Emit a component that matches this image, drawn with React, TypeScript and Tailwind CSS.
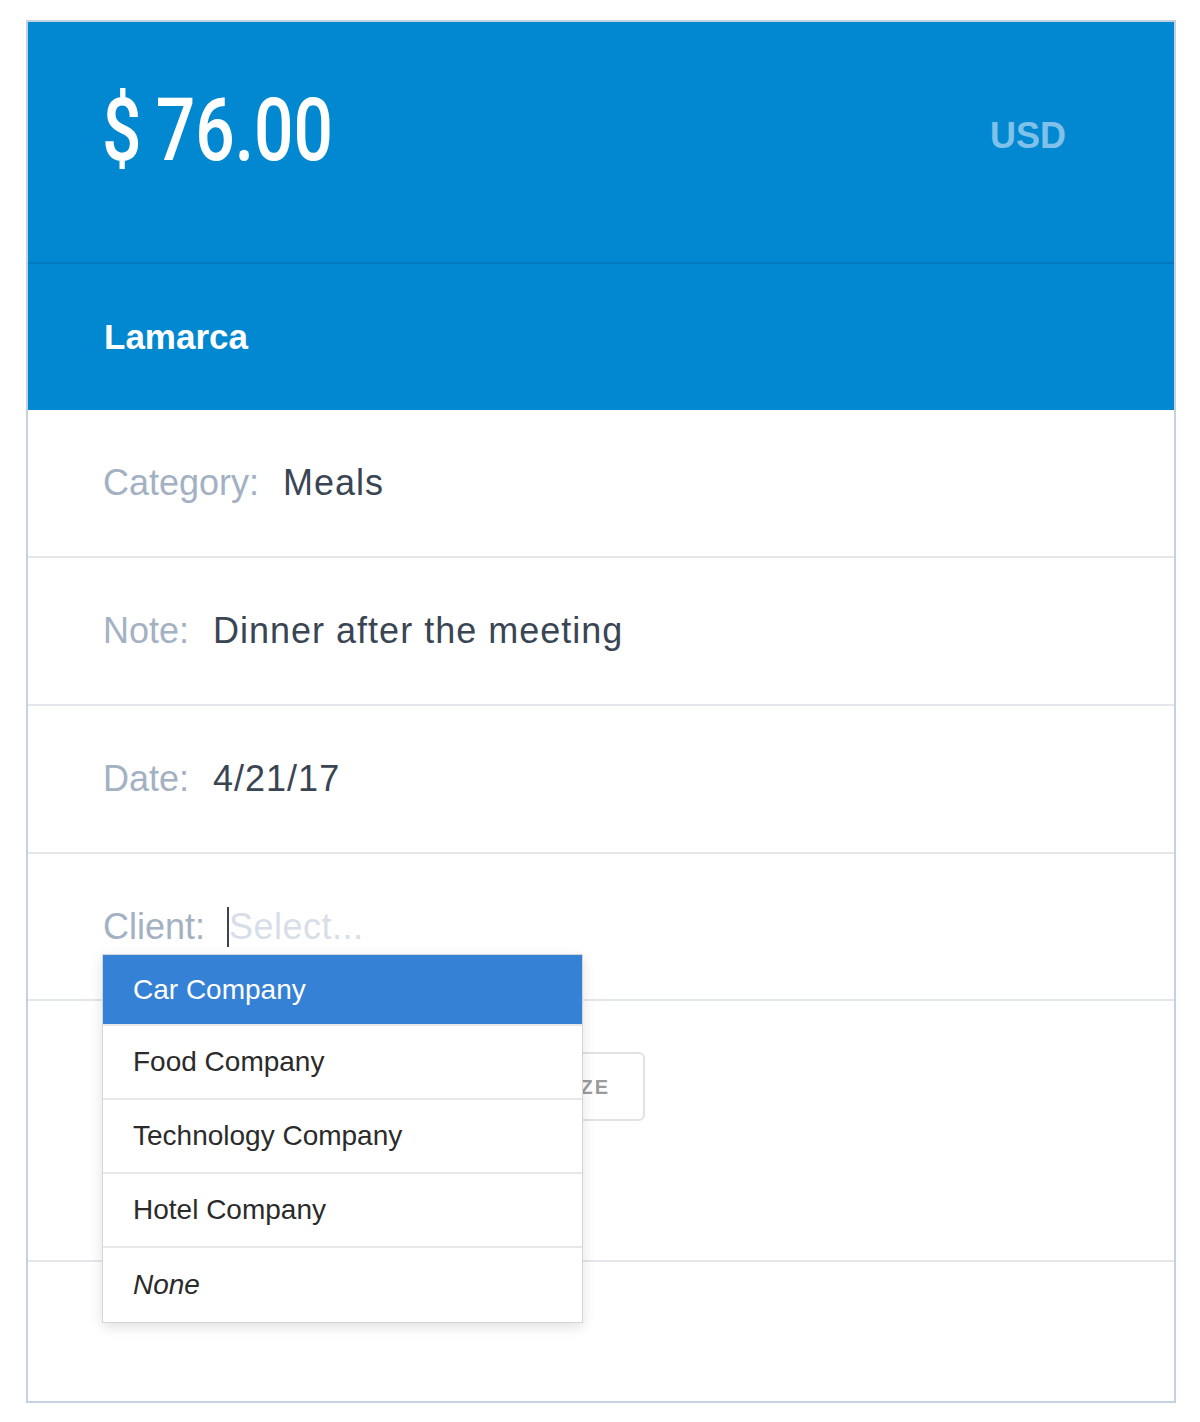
import React from "react";

interface Field {
  label: string;
  value: string;
}

const fields: Field[] = [
  { label: "Category:", value: "Meals" },
  { label: "Note:", value: "Dinner after the meeting" },
  { label: "Date:", value: "4/21/17" },
];

const clients = ["Car Company", "Food Company", "Technology Company", "Hotel Company"];

function FieldRow({ label, value }: Field) {
  return (
    <div className="flex h-[148px] items-center gap-6 border-b-2 border-[#e3e7ec] px-[75px] text-[36px]">
      <span className="text-[#a3b1c3]">{label}</span>
      <span className="tracking-[1px] text-[#3a4554]">{value}</span>
    </div>
  );
}

function ClientSelect() {
  return (
    <div className="relative flex h-[147px] items-center gap-[22px] border-b-2 border-[#e3e7ec] px-[75px] text-[36px]">
      <span className="text-[#a3b1c3]">Client:</span>
      <div className="flex items-center">
        <span className="h-[40px] w-[2px] bg-[#3a4554]"></span>
        <span className="tracking-[0.5px] text-[#d8dee7]">Select...</span>
      </div>

      <div className="absolute left-[74px] top-[100px] z-10 w-[481px] border border-[#d6d6d6] bg-white shadow-[0_4px_12px_rgba(0,0,0,0.12)]">
        <div className="divide-y-2 divide-[#e8e8e8] text-[28px]">
          {clients.map((c, i) => (
            <div
              key={c}
              className={
                i === 0
                  ? "flex h-[71px] items-center bg-[#3581d6] pl-[30px] text-white"
                  : "flex h-[74px] items-center pl-[30px] text-[#2b2b2b]"
              }
            >
              {c}
            </div>
          ))}
          <div className="flex h-[74px] items-center pl-[30px] italic text-[#2b2b2b]">None</div>
        </div>
      </div>
    </div>
  );
}

export default function App() {
  return (
    <div className="min-h-[1422px] bg-white pt-[20px] font-['Liberation_Sans',Arial,sans-serif]">
      <div className="ml-[26px] w-[1150px] border-2 border-[#c5d1df] bg-white">
        <div className="bg-[#0288d1]">
          <div className="flex h-[242px] items-start justify-between border-b-2 border-[#0279bd] pl-[74px] pr-[108px]">
            <div className="mt-[64px] flex origin-left scale-x-[0.79] font-['Roboto',sans-serif] text-[88px] font-medium leading-none text-white">
              <span className="mr-[18px]">$</span>
              <span>76.00</span>
            </div>
            <div className="mt-[96px] text-[36px] font-bold leading-none text-[#80c1ea]">USD</div>
          </div>
          <div className="flex h-[146px] items-center pl-[76px] text-[35px] font-bold text-white">
            Lamarca
          </div>
        </div>

        {fields.map((f) => (
          <FieldRow key={f.label} label={f.label} value={f.value} />
        ))}

        <ClientSelect />

        <div className="h-[261px] border-b-2 border-[#e3e7ec] px-[75px] pt-[51px]">
          <button className="flex h-[69px] w-[542px] items-center justify-end rounded-[6px] border-2 border-[#e2e2e2] pr-[33px] text-[20px] font-bold tracking-[2px] text-[#9b9b9b]">
            CATEGORIZE
          </button>
        </div>

        <div className="h-[139px]"></div>
      </div>
    </div>
  );
}
